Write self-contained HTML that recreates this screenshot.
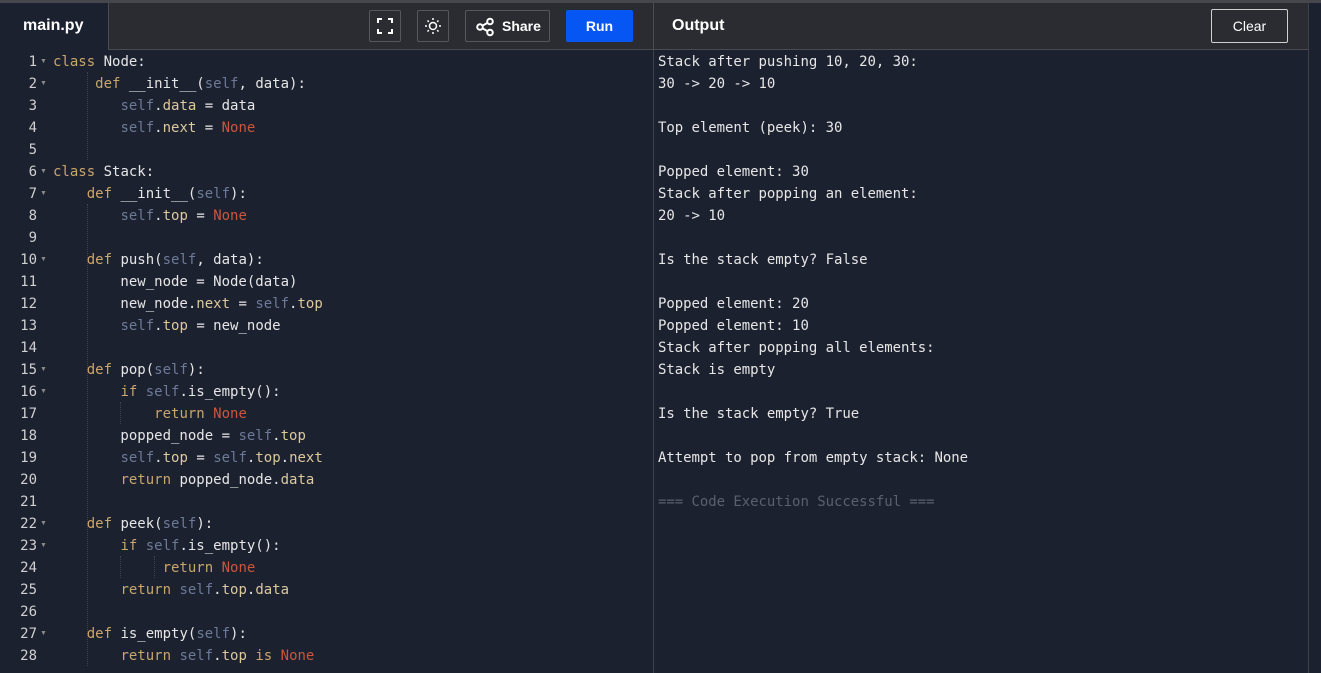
<!DOCTYPE html>
<html><head><meta charset="utf-8"><style>
*{margin:0;padding:0;box-sizing:border-box}
body{width:1321px;height:673px;overflow:hidden;background:#1c2130;font-family:"Liberation Sans",sans-serif;position:relative}
.topline{position:absolute;left:0;top:0;width:1321px;height:3px;background:#45474d}
.tab{position:absolute;left:0;top:3px;width:108px;height:47px;background:#1c2130;color:#fff;font-size:16px;font-weight:bold;padding:14px 0 0 23px}
.hbar{position:absolute;left:108px;top:3px;width:545px;height:47px;background:#2b2c31;border-left:1px solid #4a4c52;border-bottom:1px solid #4a4c52}
.obar{position:absolute;left:653px;top:3px;width:655px;height:47px;background:#2b2c31;border-left:1px solid #4a4c52;border-bottom:1px solid #4a4c52}
.rstrip{position:absolute;left:1308px;top:3px;width:13px;height:670px;background:#1c2130;border-left:1px solid #3f424a}
.divider{position:absolute;left:653px;top:50px;width:1px;height:623px;background:#3f424a}
.btn{position:absolute;top:10px;height:32px;border:1px solid #55575d;border-radius:2px}
.run{position:absolute;left:566px;top:10px;width:67px;height:32px;background:#0556f3;border-radius:2px;color:#fff;font-weight:bold;font-size:14px;text-align:center;line-height:32px}
.code,.out{position:absolute;font-family:"DejaVu Sans Mono","Liberation Mono",monospace;font-size:14px;line-height:22px;white-space:pre}
.code{left:53px;top:51px;color:#e6e6e6}
.out{left:658px;top:51px;color:#e6e6e6;letter-spacing:-0.05px}
.ln{position:absolute;left:0;top:51px;width:37px;text-align:right;font-family:"DejaVu Sans Mono",monospace;font-size:14px;line-height:22px;color:#d0d0d0;white-space:pre}
.fold{position:absolute;left:40px;font-size:7px;color:#888}
.k{color:#c9a66b}.s{color:#6c7a98}.n{color:#c9573d}.a{color:#dcc99c}
.g{position:absolute;width:0;border-left:1px dotted #3e4352}
</style></head><body>
<div class="topline"></div>
<div class="tab">main.py</div>
<div class="hbar"></div>
<div class="obar"><div style="position:absolute;left:18px;top:14px;color:#fff;font-weight:bold;font-size:16px">Output</div>
<div style="position:absolute;left:557px;top:6px;width:77px;height:34px;border:1px solid #d0d0d0;border-radius:2px;color:#fff;font-size:14px;text-align:center;line-height:32px">Clear</div></div>
<div class="rstrip"></div>
<div class="divider"></div>
<div class="btn" style="left:369px;width:32px"><svg width="30" height="30" viewBox="0 0 30 30" fill="none" stroke="#fff" stroke-width="2"><path d="M8 12V8h4M18 8h4v4M22 18v4h-4M12 22H8v-4"/></svg></div>
<div class="btn" style="left:417px;width:32px"><svg width="30" height="30" viewBox="0 0 30 30" fill="none" stroke="#fff" stroke-width="1.5"><circle cx="15" cy="15" r="3.5"/><path d="M15 7v2M15 21v2M7 15h2M21 15h2M9.5 9.5l1.3 1.3M19.2 19.2l1.3 1.3M9.5 20.5l1.3-1.3M19.2 10.8l1.3-1.3"/></svg></div>
<div class="btn" style="left:465px;width:85px"><svg style="position:absolute;left:9px;top:6px" width="20" height="20" viewBox="0 0 20 20" fill="none" stroke="#fff" stroke-width="2"><circle cx="5" cy="10" r="2.8"/><circle cx="15" cy="4.5" r="2.8"/><circle cx="15" cy="15.5" r="2.8"/><path d="M7.5 8.6l5-2.7M7.5 11.4l5 2.7"/></svg><span style="position:absolute;left:36px;top:7px;color:#fff;font-weight:bold;font-size:14px">Share</span></div>
<div class="run">Run</div>

<div class="ln">1
2
3
4
5
6
7
8
9
10
11
12
13
14
15
16
17
18
19
20
21
22
23
24
25
26
27
28</div>
<div class="fold" style="top:58px">▼</div><div class="fold" style="top:80px">▼</div><div class="fold" style="top:168px">▼</div><div class="fold" style="top:190px">▼</div><div class="fold" style="top:256px">▼</div><div class="fold" style="top:366px">▼</div><div class="fold" style="top:388px">▼</div><div class="fold" style="top:520px">▼</div><div class="fold" style="top:542px">▼</div><div class="fold" style="top:630px">▼</div>

<div class="g" style="left:87px;top:72px;height:88px"></div>
<div class="g" style="left:87px;top:204px;height:462px"></div>
<div class="g" style="left:120px;top:402px;height:22px"></div>
<div class="g" style="left:120px;top:556px;height:22px"></div>
<div class="g" style="left:154px;top:556px;height:22px"></div>

<div class="code"><span class="k">class</span> Node:
     <span class="k">def</span> __init__(<span class="s">self</span>, data):
        <span class="s">self</span>.<span class="a">data</span> = data
        <span class="s">self</span>.<span class="a">next</span> = <span class="n">None</span>

<span class="k">class</span> Stack:
    <span class="k">def</span> __init__(<span class="s">self</span>):
        <span class="s">self</span>.<span class="a">top</span> = <span class="n">None</span>

    <span class="k">def</span> push(<span class="s">self</span>, data):
        new_node = Node(data)
        new_node.<span class="a">next</span> = <span class="s">self</span>.<span class="a">top</span>
        <span class="s">self</span>.<span class="a">top</span> = new_node

    <span class="k">def</span> pop(<span class="s">self</span>):
        <span class="k">if</span> <span class="s">self</span>.is_empty():
            <span class="k">return</span> <span class="n">None</span>
        popped_node = <span class="s">self</span>.<span class="a">top</span>
        <span class="s">self</span>.<span class="a">top</span> = <span class="s">self</span>.<span class="a">top</span>.<span class="a">next</span>
        <span class="k">return</span> popped_node.<span class="a">data</span>

    <span class="k">def</span> peek(<span class="s">self</span>):
        <span class="k">if</span> <span class="s">self</span>.is_empty():
             <span class="k">return</span> <span class="n">None</span>
        <span class="k">return</span> <span class="s">self</span>.<span class="a">top</span>.<span class="a">data</span>

    <span class="k">def</span> is_empty(<span class="s">self</span>):
        <span class="k">return</span> <span class="s">self</span>.<span class="a">top</span> <span class="k">is</span> <span class="n">None</span></div>

<div class="out">Stack after pushing 10, 20, 30:
30 -> 20 -> 10

Top element (peek): 30

Popped element: 30
Stack after popping an element:
20 -> 10

Is the stack empty? False

Popped element: 20
Popped element: 10
Stack after popping all elements:
Stack is empty

Is the stack empty? True

Attempt to pop from empty stack: None

<span style="color:#5c606c">=== Code Execution Successful ===</span></div>
</body></html>
